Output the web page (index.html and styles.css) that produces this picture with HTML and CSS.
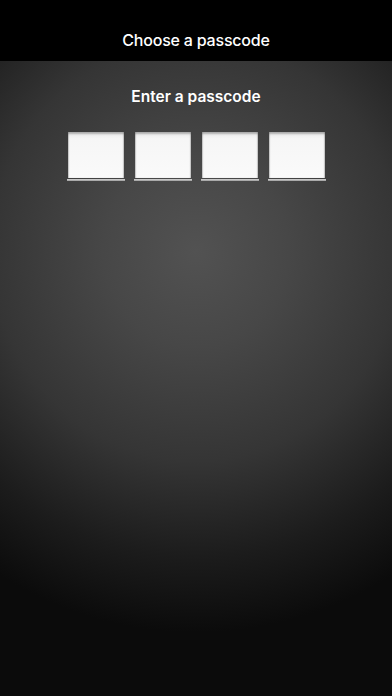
FILE: index.html
```html
<!DOCTYPE html>
<html>
<head>
<meta charset="utf-8">
<link rel="stylesheet" href="styles.css">
</head>
<body>
<div class="screen">
  <header class="navbar"><h1 class="nav-title">Choose a passcode</h1></header>
  <main class="content">
    <p class="prompt">Enter a passcode</p>
    <div class="boxes">
      <div class="box"><div class="field"></div><div class="base"></div></div>
      <div class="box"><div class="field"></div><div class="base"></div></div>
      <div class="box"><div class="field"></div><div class="base"></div></div>
      <div class="box"><div class="field"></div><div class="base"></div></div>
    </div>
  </main>
</div>
</body>
</html>
```

FILE: styles.css
```css
html, body {
  margin: 0;
  padding: 0;
  background: #000;
}
.screen {
  width: 392px;
  height: 696px;
  display: flex;
  flex-direction: column;
  font-family: Inter, "Liberation Sans", sans-serif;
  color: #fff;
}
.navbar {
  height: 61px;
  background: #000;
  display: flex;
  align-items: flex-end;
  justify-content: center;
  box-sizing: border-box;
  padding-bottom: 11px;
  flex-shrink: 0;
}
.nav-title {
  margin: 0;
  font-size: 16px;
  font-weight: 500;
  line-height: 20px;
  letter-spacing: -0.2px;
}
.content {
  flex: 1;
  display: flex;
  flex-direction: column;
  align-items: center;
  background:
    radial-gradient(ellipse 95% 60% at 50% 30%, #525252 0%, #474747 25%, #353535 55%, #1c1c1c 80%, #0b0b0b 100%);
}
.prompt {
  margin: 26px 0 0;
  font-size: 15.5px;
  font-weight: 600;
  line-height: 20px;
}
.boxes {
  display: flex;
  gap: 11px;
  margin-top: 25px;
}
.box {
  width: 56px;
  display: flex;
  flex-direction: column;
  align-items: center;
}
.field {
  width: 56px;
  height: 46px;
  background: linear-gradient(#e9e9e9 0%, #f6f6f6 15%, #fafafa 100%);
  box-shadow: inset 0 2px 2px rgba(0,0,0,0.25), inset 1px 0 1px rgba(0,0,0,0.15), inset -1px 0 1px rgba(0,0,0,0.15);
}
.base {
  width: 58px;
  height: 2px;
  margin-top: 1px;
  background: linear-gradient(#d8d8d8, #9a9a9a);
}
```
